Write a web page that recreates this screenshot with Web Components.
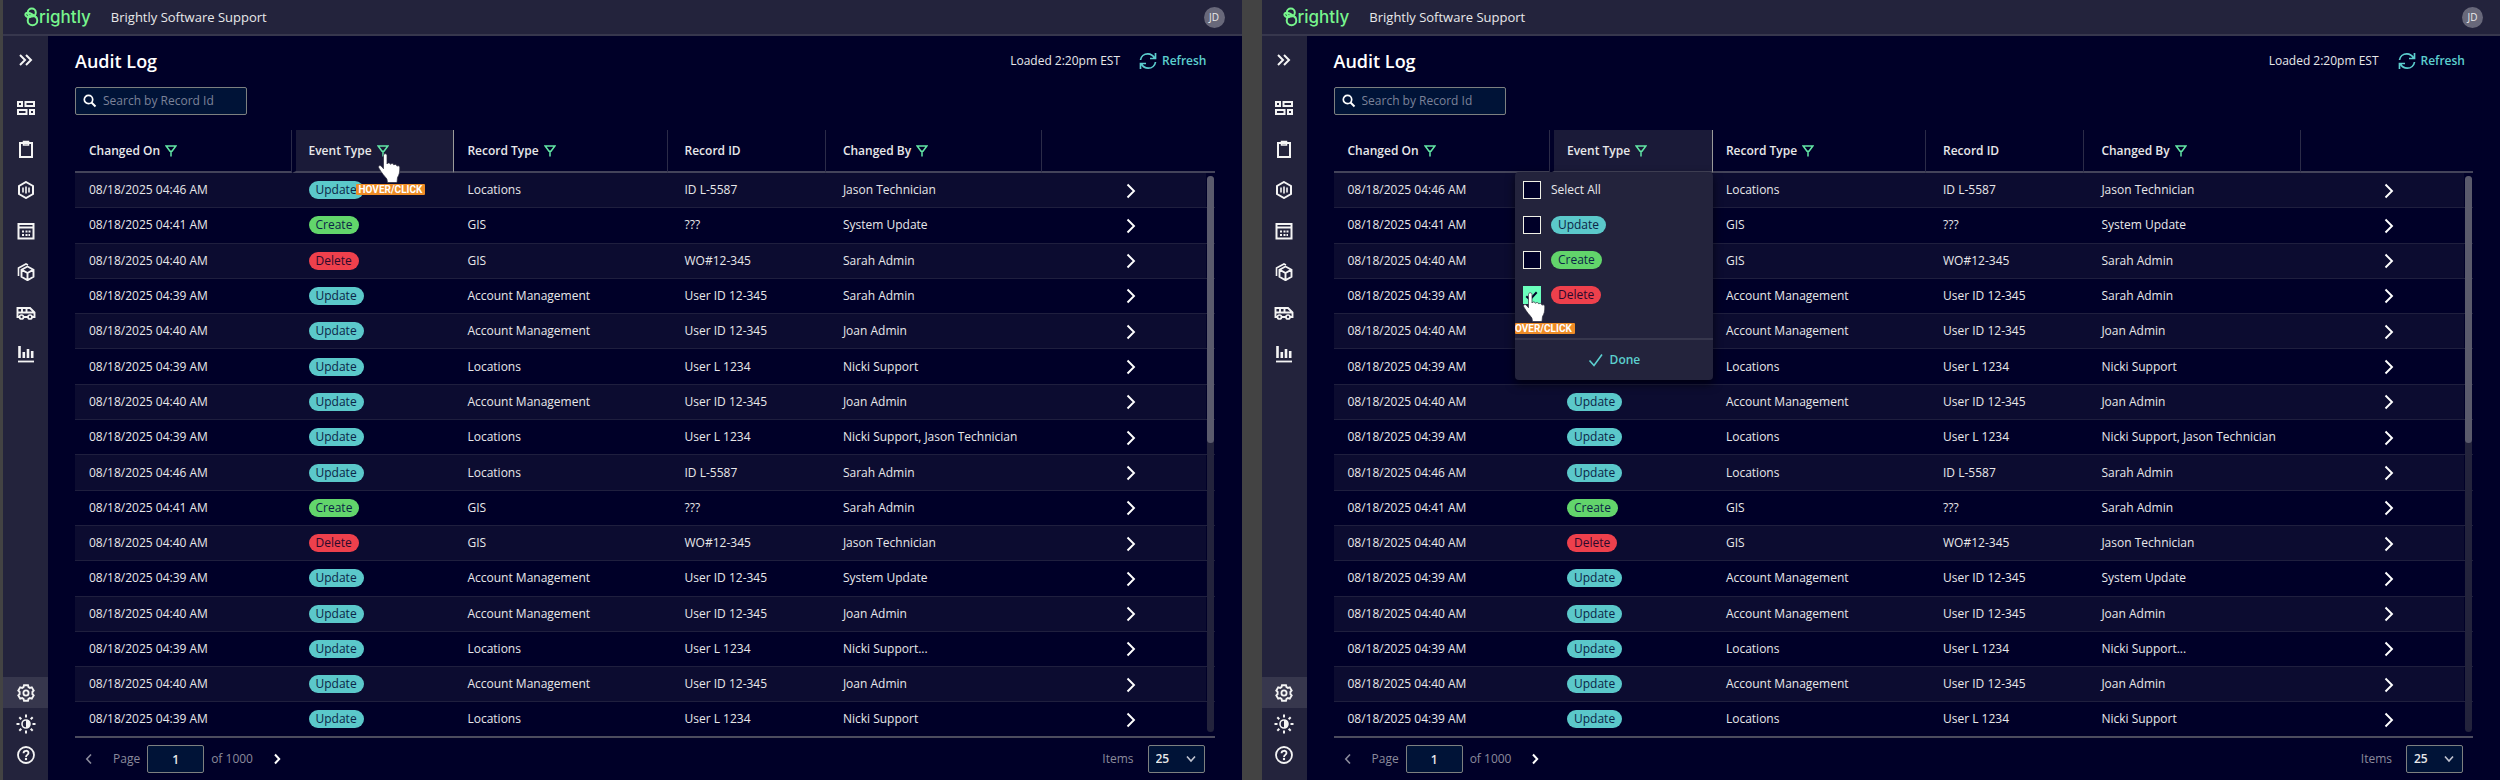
<!DOCTYPE html>
<html lang="en">
<head>
<meta charset="utf-8">
<meta name="viewport" content="width=device-width, initial-scale=1">
<title>Audit Log</title>
<style>
    :root {
        --bg: #000028;
        --panel: #23233c;
        --panel-line: #37374d;
        --row: #0c0c30;
        --line: #1f1f3e;
        --field: #001337;
        --field-line: #7d8080;
        --text: #e8e8ea;
        --muted: #8b8b9c;
        --accent: #5ccfcf;
        --green: #62e6a5;
        --font: "Open Sans", "Noto Sans", sans-serif;
    }
    body {
        margin: 0;
        height: 100vh;
        box-sizing: border-box;
        padding-left: 3px;
        display: grid;
        grid-template-columns: 1fr 1fr;
        gap: 20px;
        background: #434343;
        color: var(--text);
        font: 12px/16px var(--font);
    }
</style>
</head>
<body>
    <app-frame>
        <audit-log pointer></audit-log>
    </app-frame>
    <app-frame>
        <audit-log menu></audit-log>
    </app-frame>

<script>
const icons = {
    expand: ['18 18', '<path d="M3 4l5 5-5 5M9 4l5 5-5 5" stroke-width="2"/>'],
    dashboard: ['18 16', '<path d="M1 2h4v4H1zM8.500 2H17v4H8.500zM1 10h8.500v4H1zM13 10h4v4h-4z" stroke-width="2"/>'],
    clipboard: ['18 18', '<path d="M3 3h12v14H3z" stroke-width="2"/><path d="M6.500 1.500h5v3.500h-5z" stroke-width="1.500"/>'],
    assets: ['18 18', '<path d="M9 1l7 4v8l-7 4-7-4V5z" stroke-width="2"/><path d="M6 6.500v5M9 5.500v7M12 6.500v5" stroke-width="1.600"/>'],
    calendar: ['18 18', '<path d="M1.500 2h15v14.500h-15zM1.500 5.500h15" stroke-width="2"/><path d="M5 9.500h2M8.500 9.500h2M11.500 9.500h2M5 13h2M8.500 13h2M11.500 13h1.500" stroke-width="2"/>'],
    cube: ['18 18', '<path d="M10.500 3.500l6 3.200v7l-6 3.500-6-3.500v-7zM4.500 6.700l6 3.300 6-3.300M10.500 10v7" stroke-width="1.900"/><path d="M1.500 13V5l7.500-4 2 1" stroke-width="1.600"/>'],
    van: ['20 18', '<path d="M1.500 4h12.500l4.500 4.500V13H1.500zM1.500 8.500h17M6 4v4.500M10.500 4v4.500" stroke-width="1.900"/><g fill="var(--panel)"><circle cx="5.500" cy="13" r="2" stroke-width="1.700"/><circle cx="14" cy="13" r="2" stroke-width="1.700"/></g>'],
    chart: ['18 18', '<path d="M2.500 1v12M6.800 7v6M11 4v9M15.200 6v7" stroke-width="2.600"/><path d="M1 16.500h16" stroke-width="1.800"/>'],
    settings: ['18 18', '<path d="M7 1.200h4l.5 2 1.300.7 2-.6 1.900 3.200-1.300 1.400v2.200l1.300 1.400-1.900 3.200-2-.6-1.300.7-.5 2H7l-.5-2-1.300-.7-2 .6-1.900-3.200 1.300-1.400V7.900L1.300 6.500l1.900-3.200 2 .6 1.300-.7z" stroke-width="1.900"/><circle cx="9" cy="9" r="2.600" stroke-width="1.800"/>'],
    contrast: ['20 20', '<circle cx="10" cy="10" r="4" stroke-width="1.600"/><path d="M10 6a4 4 0 0 1 0 8z" fill="currentColor" stroke="none"/><path d="M10 .5v3M10 16.500v3M.5 10h3M16.500 10h3M3.300 3.300l2 2M14.700 14.700l2 2M3.300 16.700l2-2M14.700 5.300l2-2" stroke-width="2"/>'],
    help: ['18 18', '<circle cx="9" cy="9" r="8" stroke-width="1.800"/><path d="M6.500 7.200C6.500 4 11.500 4 11.500 7c0 2-2.500 1.800-2.500 4" stroke-width="1.800"/><circle cx="9" cy="13" r="1.200" fill="currentColor" stroke="none"/>'],
    search: ['14 14', '<circle cx="5.500" cy="5.500" r="4.200" stroke-width="1.700"/><path d="M8.500 8.500l4 4" stroke-width="1.900"/>'],
    filter: ['12 12', '<path d="M1.200 1h9.600L7 6.200H5zM6 5.500v6" stroke-width="1.500"/>'],
    refresh: ['18 18', '<path d="M1.500 8C2 4.500 5 1.800 8.800 1.800c3 0 5.200 1.500 6.700 4.200M16.500 1v5.500H11M16.500 10c-.5 3.500-3.500 6.200-7.300 6.200-3 0-5.200-1.500-6.700-4.200M1.500 17v-5.500H7" stroke-width="1.700"/>'],
    next: ['10 16', '<path d="M1.500 1.500L8 8l-6.500 6.500" stroke-width="1.900"/>'],
    right: ['8 12', '<path d="M2 1.500L6.200 6 2 10.500" stroke-width="2"/>'],
    left: ['8 12', '<path d="M6 1.500L1.800 6 6 10.500" stroke-width="1.600"/>'],
    down: ['12 8', '<path d="M2 1.500l4 4.500 4-4.500" stroke-width="1.600"/>'],
    check: ['16 14', '<path d="M1.500 7.500l4.500 5 8-11" stroke-width="1.600"/>']
};

class UiIcon extends HTMLElement {
    connectedCallback() {
        const shadow = this.attachShadow({ mode: "open" });
        const [size, shape] = icons[this.getAttribute("name")];
        const [w, h] = size.split(" ");
        shadow.innerHTML = `
            <style>
                :host { display: inline-flex; flex: none; }
            </style>
            <svg width="${w}" height="${h}" viewBox="0 0 ${size}" fill="none" stroke="currentColor" aria-hidden="true">${shape}</svg>
        `;
    }
}

class BrightlyLogo extends HTMLElement {
    connectedCallback() {
        const shadow = this.attachShadow({ mode: "open" });
        shadow.innerHTML = `
            <style>
                :host { display: block; }
                a {
                    display: flex;
                    align-items: center;
                    color: #77f58d;
                    font: 500 17px/20px Inter, sans-serif;
                    text-decoration: none;
                }
            </style>
            <a href="#" aria-label="Brightly">
                <svg width="15" height="20" viewBox="0 0 15 20" fill="none" stroke="currentColor" stroke-width="2" aria-hidden="true">
                    <circle cx="8.500" cy="13.500" r="4.800"/>
                    <circle cx="7.800" cy="5.600" r="4"/>
                    <path d="M13 11C9 7 3.500 4.500 1.800 6.500S3.500 11 7 9.500"/>
                </svg>
                <span>rightly</span>
            </a>
        `;
    }
}

class TopBar extends HTMLElement {
    connectedCallback() {
        const shadow = this.attachShadow({ mode: "open" });
        shadow.innerHTML = `
            <style>
                :host { display: block; }
                header {
                    display: flex;
                    align-items: center;
                    height: 34px;
                    padding: 0 17px 0 21px;
                    background: var(--panel);
                    border-bottom: 2px solid var(--panel-line);
                }
                .name {
                    margin-left: 20px;
                    font-size: 13px;
                }
                .avatar {
                    display: grid;
                    place-items: center;
                    width: 21px;
                    height: 21px;
                    margin-left: auto;
                    padding: 0;
                    border: 0;
                    border-radius: 50%;
                    background: #68687a;
                    color: var(--text);
                    font: 10px/12px var(--font);
                }
            </style>
            <header>
                <brightly-logo></brightly-logo>
                <span class="name"><slot></slot></span>
                <button class="avatar">JD</button>
            </header>
        `;
    }
}

class SideNav extends HTMLElement {
    connectedCallback() {
        const shadow = this.attachShadow({ mode: "open" });
        const link = ([icon, label]) => `<a href="#" aria-label="${label}"><ui-icon name="${icon}"></ui-icon></a>`;
        const main = [
            ["dashboard", "Dashboard"], ["clipboard", "Work orders"], ["assets", "Assets"], ["calendar", "Calendar"],
            ["cube", "Inventory"], ["van", "Fleet"], ["chart", "Reports"]
        ];
        shadow.innerHTML = `
            <style>
                :host { display: block; }
                nav {
                    display: flex;
                    flex-direction: column;
                    height: 100%;
                    box-sizing: border-box;
                    padding: 3px 0 10px;
                    background: var(--panel);
                }
                a, button {
                    display: grid;
                    place-items: center;
                    height: 41px;
                    padding: 0;
                    border: 0;
                    background: none;
                    color: #f4f4f4;
                }
                .expand { margin-bottom: 7px; }
                .bottom { margin-top: auto; }
                .bottom a { height: 31px; }
                .bottom a:first-child { background: var(--panel-line); }
            </style>
            <nav>
                <button class="expand" aria-label="Expand menu"><ui-icon name="expand"></ui-icon></button>
                ${main.map(link).join("")}
                <div class="bottom">
                    ${[["settings", "Settings"], ["contrast", "Theme"], ["help", "Help"]].map(link).join("")}
                </div>
            </nav>
        `;
    }
}

class AppFrame extends HTMLElement {
    connectedCallback() {
        const shadow = this.attachShadow({ mode: "open" });
        shadow.innerHTML = `
            <style>
                :host {
                    display: grid;
                    grid-template: "top top" auto "side main" 1fr / 45px 1fr;
                    min-width: 0;
                    min-height: 0;
                    background: var(--bg);
                }
                top-bar { grid-area: top; }
                side-nav { grid-area: side; }
                main {
                    grid-area: main;
                    display: grid;
                    min-width: 0;
                    min-height: 0;
                }
            </style>
            <top-bar>Brightly Software Support</top-bar>
            <side-nav></side-nav>
            <main><slot></slot></main>
        `;
    }
}

class EventPill extends HTMLElement {
    connectedCallback() {
        const shadow = this.attachShadow({ mode: "open" });
        shadow.innerHTML = `
            <style>
                :host {
                    display: inline-block;
                    padding: 1px 7px;
                    border-radius: 9px;
                    background: #5bc8ca;
                    color: #0b2547;
                    font-size: 12px;
                    line-height: 16px;
                }
                :host([type="Create"]) { background: #62d56b; }
                :host([type="Delete"]) { background: #ee404c; color: #2b0a2c; }
            </style>
            ${this.getAttribute("type")}
        `;
    }
}

// hand with the orange tag below it, placed by its parent at the finger tip
class ClickPointer extends HTMLElement {
    connectedCallback() {
        const shadow = this.attachShadow({ mode: "open" });
        shadow.innerHTML = `
            <style>
                :host {
                    display: flex;
                    flex-direction: column;
                    align-items: center;
                    gap: 1px;
                    pointer-events: none;
                }
                span {
                    padding: 0 3px;
                    border-radius: 1px;
                    background: #ee8c26;
                    color: #fff;
                    font: 700 10px/11px Roboto, sans-serif;
                }
                /* tag starts at the edge of the menu */
                :host([edge]) { align-items: flex-start; }
                :host([edge]) svg { margin-left: 8px; }
                :host([edge]) span { padding-left: 0; }
            </style>
            <svg width="24" height="30" viewBox="0 0 24 30" fill="#fff" stroke="#2a2a3a" stroke-width=".7" aria-hidden="true">
                <path d="M5.500 2.500c0-2.300 3.500-2.300 3.500 0V11c.4-1.500 3.200-1.500 3.500.4.500-1.300 3-1.200 3.400.6.700-1 3-.8 3.100 1.200.8-.8 2.700-.5 2.800 1.500 0 5-.6 7-2.300 9.800l-.5 5H9.500l-.6-3.500C7 23.500 3.500 20 .8 15c-1-2 1.200-3.200 2.500-1.800l2.200 2.500z"/>
            </svg>
            <span><slot></slot></span>
        `;
    }
}

class FilterMenu extends HTMLElement {
    connectedCallback() {
        const shadow = this.attachShadow({ mode: "open" });
        shadow.innerHTML = `
            <style>
                :host {
                    display: block;
                    width: 198px;
                    border-radius: 4px;
                    background: var(--panel);
                    box-shadow: 0 4px 10px rgba(0, 0, 0, .6);
                    font-weight: 400;
                }
                fieldset {
                    position: relative;
                    display: grid;
                    grid-auto-rows: 18px;
                    gap: 17px;
                    margin: 0;
                    padding: 9px 8px 34px;
                    border: 0;
                }
                label {
                    display: flex;
                    align-items: center;
                    gap: 10px;
                }
                input {
                    appearance: none;
                    display: grid;
                    place-items: center;
                    width: 18px;
                    height: 18px;
                    margin: 0;
                    border: 1px solid #f0f0e6;
                    background: var(--bg);
                }
                input:checked {
                    border-color: #6bffbd;
                    background: #6bffbd;
                }
                input:checked::before {
                    content: "";
                    width: 9px;
                    height: 4px;
                    border: solid var(--bg);
                    border-width: 0 0 2px 2px;
                    transform: rotate(-48deg);
                }
                click-pointer {
                    position: absolute;
                    left: 0;
                    top: 120px;
                }
                footer {
                    display: grid;
                    border-top: 2px solid var(--panel-line);
                }
                button {
                    display: flex;
                    align-items: center;
                    justify-content: center;
                    gap: 6px;
                    height: 40px;
                    border: 0;
                    background: none;
                    color: var(--accent);
                    font: 600 12px/16px var(--font);
                }
            </style>
            <fieldset aria-label="Event Type">
                <label><input type="checkbox">Select All</label>
                <label><input type="checkbox"><event-pill type="Update"></event-pill></label>
                <label><input type="checkbox"><event-pill type="Create"></event-pill></label>
                <label><input type="checkbox" checked><event-pill type="Delete"></event-pill></label>
                <click-pointer edge>OVER/CLICK</click-pointer>
            </fieldset>
            <footer>
                <button><ui-icon name="check"></ui-icon>Done</button>
            </footer>
        `;
    }
}

const events = [
    ["08/18/2025 04:46 AM", "Update", "Locations", "ID L-5587", "Jason Technician"],
    ["08/18/2025 04:41 AM", "Create", "GIS", "???", "System Update"],
    ["08/18/2025 04:40 AM", "Delete", "GIS", "WO#12-345", "Sarah Admin"],
    ["08/18/2025 04:39 AM", "Update", "Account Management", "User ID 12-345", "Sarah Admin"],
    ["08/18/2025 04:40 AM", "Update", "Account Management", "User ID 12-345", "Joan Admin"],
    ["08/18/2025 04:39 AM", "Update", "Locations", "User L 1234", "Nicki Support"],
    ["08/18/2025 04:40 AM", "Update", "Account Management", "User ID 12-345", "Joan Admin"],
    ["08/18/2025 04:39 AM", "Update", "Locations", "User L 1234", "Nicki Support, Jason Technician"],
    ["08/18/2025 04:46 AM", "Update", "Locations", "ID L-5587", "Sarah Admin"],
    ["08/18/2025 04:41 AM", "Create", "GIS", "???", "Sarah Admin"],
    ["08/18/2025 04:40 AM", "Delete", "GIS", "WO#12-345", "Jason Technician"],
    ["08/18/2025 04:39 AM", "Update", "Account Management", "User ID 12-345", "System Update"],
    ["08/18/2025 04:40 AM", "Update", "Account Management", "User ID 12-345", "Joan Admin"],
    ["08/18/2025 04:39 AM", "Update", "Locations", "User L 1234", "Nicki Support..."],
    ["08/18/2025 04:40 AM", "Update", "Account Management", "User ID 12-345", "Joan Admin"],
    ["08/18/2025 04:39 AM", "Update", "Locations", "User L 1234", "Nicki Support"]
];

class EventTable extends HTMLElement {
    connectedCallback() {
        const shadow = this.attachShadow({ mode: "open" });
        const head = (label, extra = "") => `
            <span>${label}<button aria-label="Filter ${label}"><ui-icon name="filter"></ui-icon></button></span>${extra}`;
        const row = ([date, type, record, id, user]) => `
            <tr>
                <td>${date}</td>
                <td><event-pill type="${type}"></event-pill></td>
                <td class="record">${record}</td>
                <td>${id}</td>
                <td>${user}</td>
                <td class="open"><button aria-label="Open record"><ui-icon name="next"></ui-icon></button></td>
                <td class="gutter"></td>
            </tr>`;
        shadow.innerHTML = `
            <style>
                :host {
                    display: block;
                    position: relative;
                    min-height: 0;
                }
                table {
                    width: 100%;
                    height: 100%;
                    table-layout: fixed;
                    border-spacing: 0;
                }
                .w-date, .w-user { width: 19%; }
                .w-event { width: 14.300%; }
                .w-record { width: 18.700%; }
                .w-id { width: 13.900%; }
                .w-gutter { width: 9px; }
                th, td {
                    box-sizing: border-box;
                    padding: 0 0 0 14px;
                    text-align: left;
                    white-space: nowrap;
                }
                th + th, td + td { padding-left: 17px; }
                th.record, td.record { padding-left: 13px; }
                th {
                    position: relative;
                    height: 43px;
                    border-right: 1px solid #2b2b48;
                    border-bottom: 2px solid #44445a;
                    font-weight: 600;
                }
                th:nth-last-child(-n+2) { border-right: 0; }
                th.active {
                    padding-left: 13px;
                    border-left: 4px solid var(--bg);
                    border-right-color: #9a9a9a;
                    background: #1a1a38;
                    background-clip: padding-box;
                }
                th span {
                    display: flex;
                    align-items: center;
                    gap: 5px;
                }
                button {
                    display: inline-flex;
                    padding: 0;
                    border: 0;
                    background: none;
                    color: var(--green);
                }
                td {
                    border-bottom: 1px solid var(--line);
                }
                tr:nth-child(odd) td { background: var(--row); }
                tr:last-child td { border-bottom: 0; }
                tr td.gutter {
                    padding: 0;
                    background: none;
                }
                .open { padding-right: 70px; text-align: right; }
                .open button { color: #fff; vertical-align: middle; }
                filter-menu {
                    position: absolute;
                    z-index: 2;
                    top: 42px;
                    right: -1px;
                }
                th click-pointer {
                    position: absolute;
                    z-index: 2;
                    top: 23px;
                    left: 60px;
                }
                .track {
                    position: absolute;
                    top: 46px;
                    right: 1px;
                    bottom: 4px;
                    width: 7px;
                    border-radius: 4px;
                    background: var(--panel);
                }
                .thumb {
                    height: 48%;
                    border-radius: 4px;
                    background: #5a5a6c;
                }
            </style>
            <table>
                <colgroup>
                    <col class="w-date"><col class="w-event"><col class="w-record"><col class="w-id"><col class="w-user"><col><col class="w-gutter">
                </colgroup>
                <thead>
                    <tr>
                        <th>${head("Changed On")}</th>
                        <th class="active">${head("Event Type",
                            (this.hasAttribute("menu") ? "<filter-menu></filter-menu>" : "") +
                            (this.hasAttribute("pointer") ? "<click-pointer>HOVER/CLICK</click-pointer>" : ""))}</th>
                        <th class="record">${head("Record Type")}</th>
                        <th>Record ID</th>
                        <th>${head("Changed By")}</th>
                        <th></th>
                        <th></th>
                    </tr>
                </thead>
                <tbody>${events.map(row).join("")}</tbody>
            </table>
            <div class="track"><div class="thumb"></div></div>
        `;
    }
}

class TablePager extends HTMLElement {
    connectedCallback() {
        const shadow = this.attachShadow({ mode: "open" });
        shadow.innerHTML = `
            <style>
                :host {
                    display: flex;
                    align-items: center;
                    height: 42px;
                    padding: 0 10px 0 4px;
                    border-top: 2px solid #4c4c5e;
                    color: var(--muted);
                }
                button {
                    display: grid;
                    place-items: center;
                    width: 20px;
                    height: 20px;
                    padding: 0;
                    border: 0;
                    background: none;
                    color: #fff;
                }
                button:disabled { color: var(--muted); }
                label {
                    display: flex;
                    align-items: center;
                    gap: 7px;
                    margin: 0 7px 0 14px;
                }
                input, select {
                    appearance: none;
                    box-sizing: border-box;
                    width: 57px;
                    height: 28px;
                    border: 1px solid var(--field-line);
                    border-radius: 2px;
                    background: var(--field);
                    color: var(--text);
                    font: 600 12px/18px var(--font);
                }
                input { text-align: center; }
                select { padding: 0 7px; }
                .next { margin-left: 14px; }
                .items {
                    position: relative;
                    gap: 14px;
                    margin: 0 0 0 auto;
                }
                .items ui-icon {
                    position: absolute;
                    right: 8px;
                    color: #c0c4d0;
                }
            </style>
            <button aria-label="Previous page" disabled><ui-icon name="left"></ui-icon></button>
            <label>Page <input type="text" value="1"></label>
            <span>of 1000</span>
            <button class="next" aria-label="Next page"><ui-icon name="right"></ui-icon></button>
            <label class="items">Items <select><option>25</option><option>50</option></select><ui-icon name="down"></ui-icon></label>
        `;
    }
}

class AuditLog extends HTMLElement {
    connectedCallback() {
        const shadow = this.attachShadow({ mode: "open" });
        const state = ["menu", "pointer"].filter(name => this.hasAttribute(name)).join(" ");
        shadow.innerHTML = `
            <style>
                :host {
                    display: flex;
                    flex-direction: column;
                    min-height: 0;
                    padding: 0 27px;
                }
                .title {
                    display: flex;
                    align-items: center;
                    height: 49px;
                    margin-bottom: 2px;
                }
                h1 {
                    margin: 0;
                    font-size: 18px;
                    line-height: 24px;
                    font-weight: 600;
                    color: #fff;
                }
                .loaded { margin-left: auto; }
                .refresh {
                    display: flex;
                    align-items: center;
                    gap: 5px;
                    margin: 0 8px 0 19px;
                    padding: 0;
                    border: 0;
                    background: none;
                    color: var(--accent);
                    font: 600 12px/16px var(--font);
                }
                .search {
                    display: flex;
                    align-items: center;
                    gap: 6px;
                    width: 172px;
                    height: 28px;
                    box-sizing: border-box;
                    margin-bottom: 15px;
                    padding: 0 7px;
                    border: 1px solid var(--field-line);
                    border-radius: 2px;
                    background: var(--field);
                    color: #fff;
                }
                input {
                    flex: 1;
                    min-width: 0;
                    padding: 0;
                    border: 0;
                    outline: 0;
                    background: none;
                    color: inherit;
                    font: inherit;
                }
                input::placeholder { color: #7c8299; }
                event-table { flex: 1; }
            </style>
            <div class="title">
                <h1>Audit Log</h1>
                <span class="loaded">Loaded 2:20pm EST</span>
                <button class="refresh"><ui-icon name="refresh"></ui-icon>Refresh</button>
            </div>
            <label class="search">
                <ui-icon name="search"></ui-icon>
                <input type="text" placeholder="Search by Record Id" aria-label="Search by Record Id">
            </label>
            <event-table ${state}></event-table>
            <table-pager></table-pager>
        `;
    }
}

customElements.define('ui-icon', UiIcon);
customElements.define('brightly-logo', BrightlyLogo);
customElements.define('top-bar', TopBar);
customElements.define('side-nav', SideNav);
customElements.define('event-pill', EventPill);
customElements.define('click-pointer', ClickPointer);
customElements.define('filter-menu', FilterMenu);
customElements.define('event-table', EventTable);
customElements.define('table-pager', TablePager);
customElements.define('audit-log', AuditLog);
customElements.define('app-frame', AppFrame);
</script>
</body>
</html>
